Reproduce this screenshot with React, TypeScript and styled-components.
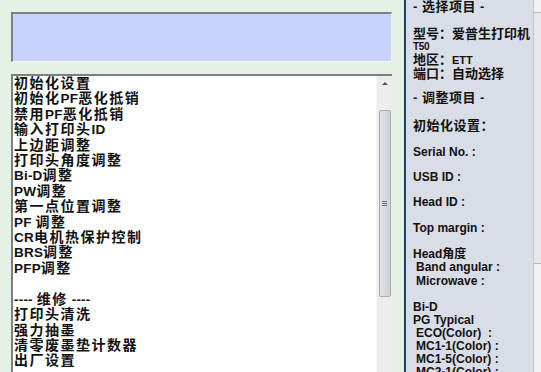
import styled, { createGlobalStyle } from 'styled-components';

const GlobalStyle = createGlobalStyle`
  html, body {
    margin: 0;
    padding: 0;
    overflow: hidden;
    background: #e4f2e5;
  }
`;

const listItems = [
  '初始化设置',
  '初始化PF恶化抵销',
  '禁用PF恶化抵销',
  '输入打印头ID',
  '上边距调整',
  '打印头角度调整',
  'Bi-D调整',
  'PW调整',
  '第一点位置调整',
  'PF 调整',
  'CR电机热保护控制',
  'BRS调整',
  'PFP调整',
  '',
  '---- 维修 ----',
  '打印头清洗',
  '强力抽墨',
  '清零废墨垫计数器',
  '出厂设置',
];

// latin runs get their own span so they don't pick up the CJK letter spacing
const renderItem = (text: string) =>
  text.split(/([A-Za-z0-9\- ]+)/).map((part, i) =>
    /^[A-Za-z0-9\- ]+$/.test(part) ? <Latin key={i}>{part}</Latin> : part
  );

const App = () => {
  return (
    <>
      <GlobalStyle />
      <Window>
        <LeftPane>
          <StatusBox />
          <ListBox>
            <List>
              {listItems.map((item, i) => (
                <Item key={i}>{item ? renderItem(item) : '\u00a0'}</Item>
              ))}
            </List>
            <ScrollBar>
              <Arrow />
              <Thumb>
                <Grip>
                  <span />
                  <span />
                  <span />
                </Grip>
              </Thumb>
            </ScrollBar>
          </ListBox>
        </LeftPane>
        <InfoPanel>
          <Block $mt={0} $lh={14}>
            <Heading>- 选择项目 -</Heading>
          </Block>
          <Block $mt={13} $lh={13}>
            <Cjk>型号：爱普生打印机</Cjk>
            <Tiny>T50</Tiny>
            <Cjk>
              地区：<Small>ETT</Small>
            </Cjk>
            <Cjk>端口：自动选择</Cjk>
          </Block>
          <Block $mt={11} $lh={14}>
            <Heading>- 调整项目 -</Heading>
          </Block>
          <Block $mt={14} $lh={14}>
            <Heading>初始化设置：</Heading>
          </Block>
          <Block $mt={13} $lh={13}>
            <Label>Serial No. :</Label>
          </Block>
          <Block $mt={12} $lh={13}>
            <Label>USB ID :</Label>
          </Block>
          <Block $mt={12} $lh={13}>
            <Label>Head ID :</Label>
          </Block>
          <Block $mt={13} $lh={13}>
            <Label>Top margin :</Label>
          </Block>
          <Block $mt={12.5} $lh={13.5}>
            <Label>Head角度</Label>
            <Label $indent>Band angular :</Label>
            <Label $indent>Microwave :</Label>
          </Block>
          <Block $mt={12.5} $lh={13.1}>
            <Label>Bi-D</Label>
            <Label>PG Typical</Label>
            <Label $indent>ECO(Color)&nbsp; :</Label>
            <Label $indent>MC1-1(Color) :</Label>
            <Label $indent>MC1-5(Color) :</Label>
            <Label $indent>MC2-1(Color) :</Label>
          </Block>
        </InfoPanel>
        <SideScroll>
          <SideThumb />
        </SideScroll>
      </Window>
    </>
  );
};

export default App;

const Window = styled.div`
  display: flex;
  width: 541px;
  height: 372px;
  overflow: hidden;
  font-family: 'Liberation Sans', 'Noto Sans CJK SC', sans-serif;
  color: #111;
`;

const LeftPane = styled.div`
  width: 404px;
  flex-shrink: 0;
  box-sizing: border-box;
  padding: 12px 11px 0 11px;
  display: flex;
  flex-direction: column;
  gap: 12px;
  background: #e4f2e5;
  border-right: 1px solid #d4ece8;
`;

const StatusBox = styled.div`
  height: 50px;
  box-sizing: border-box;
  background: #c8d3fb;
  border-top: 2px solid #7c7f86;
  border-left: 2px solid #7c7f86;
  border-right: 1px solid #eef2f8;
  border-bottom: 1px solid #eef2f8;
`;

const ListBox = styled.div`
  flex: 1;
  display: flex;
  min-height: 0;
  background: #fff;
  border-top: 2px solid #7c7f86;
  border-left: 2px solid #7c7f86;
  overflow: hidden;
`;

const List = styled.div`
  flex: 1;
  padding-left: 1px;
`;

const Item = styled.div`
  font-size: 14px;
  font-weight: bold;
  line-height: 15.4px;
  letter-spacing: 1.5px;
  white-space: pre;
`;

const Latin = styled.span`
  font-size: 13.5px;
  letter-spacing: 0.2px;
`;

const ScrollBar = styled.div`
  width: 15px;
  flex-shrink: 0;
  background: #ededed;
  border-left: 1px solid #f6f6f6;
  display: flex;
  flex-direction: column;
  align-items: center;
`;

const Arrow = styled.div`
  margin-top: 6px;
  width: 0;
  height: 0;
  border-left: 3px solid transparent;
  border-right: 3px solid transparent;
  border-bottom: 3px solid #555;
`;

const Thumb = styled.div`
  margin-top: 25px;
  width: 12px;
  height: 187px;
  box-sizing: border-box;
  border: 1px solid #a9abb3;
  border-radius: 2px;
  background: linear-gradient(to right, #e2e2e6, #cfd0d6);
  display: flex;
  align-items: center;
  justify-content: center;
`;

const Grip = styled.div`
  display: flex;
  flex-direction: column;
  gap: 1px;
  span {
    display: block;
    width: 5px;
    height: 1px;
    background: #6a6c74;
  }
`;

const InfoPanel = styled.div`
  width: 129px;
  flex-shrink: 0;
  box-sizing: border-box;
  padding-left: 7px;
  background: #d9dde6;
  border-left: 2px solid #25405e;
  display: flex;
  flex-direction: column;
`;

const Block = styled.div<{ $mt: number; $lh: number }>`
  margin-top: ${(p) => p.$mt}px;
  line-height: ${(p) => p.$lh}px;
  white-space: nowrap;
`;

const Heading = styled.div`
  font-size: 13px;
  font-weight: bold;
  letter-spacing: 0.5px;
`;

const Cjk = styled.div`
  font-size: 13px;
  font-weight: bold;
`;

const Tiny = styled.div`
  font-size: 10px;
  font-weight: bold;
  letter-spacing: -0.3px;
`;

const Small = styled.span`
  font-size: 11px;
`;

const Label = styled.div<{ $indent?: boolean }>`
  font-size: 12px;
  font-weight: bold;
  padding-left: ${(p) => (p.$indent ? 3 : 0)}px;
`;

const SideScroll = styled.div`
  flex: 1;
  background: #f2f2f2;
  border-left: 1px solid #c4c7ce;
`;

const SideThumb = styled.div`
  margin-top: 12px;
  height: 250px;
  border-top: 1px solid #b8bbc2;
  border-bottom: 1px solid #b8bbc2;
  background: #e8e8ea;
`;
